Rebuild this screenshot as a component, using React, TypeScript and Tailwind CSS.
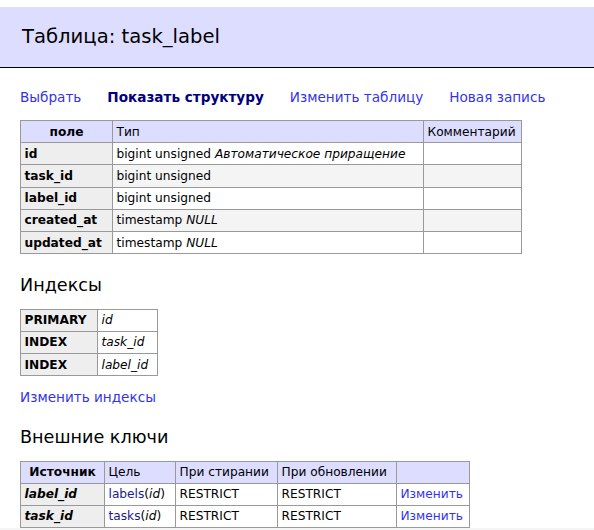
import React from 'react'

const fields = [
  { name: 'id', type: 'bigint unsigned', extra: 'Автоматическое приращение' },
  { name: 'task_id', type: 'bigint unsigned', extra: '' },
  { name: 'label_id', type: 'bigint unsigned', extra: '' },
  { name: 'created_at', type: 'timestamp', extra: 'NULL' },
  { name: 'updated_at', type: 'timestamp', extra: 'NULL' }
]

const indexes = [
  { kind: 'PRIMARY', col: 'id' },
  { kind: 'INDEX', col: 'task_id' },
  { kind: 'INDEX', col: 'label_id' }
]

const foreignKeys = [
  { source: 'label_id', table: 'labels' },
  { source: 'task_id', table: 'tasks' }
]

const cell = 'border border-[#999] px-[3.5px] py-[2.6px] align-top whitespace-nowrap'
const head = 'border border-[#999] bg-[#ddf] px-[3.5px] py-[2.6px] text-left font-normal whitespace-nowrap'
const tableCls = 'border-collapse text-[12.2px] leading-[16px]'

const App: React.FC = () => {
  return (
    <div className="min-h-[530px] bg-white text-black text-[13.6px] leading-[18px] font-['DejaVu_Sans',Verdana,sans-serif]">
      {/* Header */}
      <h2 className="mt-[7px] mb-5 border-b border-black bg-[#ddf] px-[22px] py-[17px] text-[19.6px] leading-[26px] font-normal">
        Таблица: task_label
      </h2>

      <div className="pl-5">
        <p className="my-[14px] flex gap-[26px] whitespace-nowrap">
          <a className="text-[#3333ee]">Выбрать</a>
          <a className="font-bold text-[#000080]">Показать структуру</a>
          <a className="text-[#3333ee]">Изменить таблицу</a>
          <a className="text-[#3333ee]">Новая запись</a>
        </p>

        {/* Fields */}
        <table className={tableCls + ' mt-[13px]'}>
          <thead>
            <tr>
              <th className="w-[92px] border border-[#999] bg-[#ddf] px-[6px] py-[2.6px] text-center font-bold">поле</th>
              <td className={head + ' w-[311px]'}>Тип</td>
              <td className={head + ' w-[98px]'}>Комментарий</td>
            </tr>
          </thead>
          <tbody>
            {fields.map((f, i) => (
              <tr key={f.name} className={i % 2 === 1 ? 'bg-[#f4f4f4]' : ''}>
                <th className={cell + ' bg-[#eee] text-left font-bold'}>{f.name}</th>
                <td className={cell}>
                  {f.type} {f.extra && <i>{f.extra}</i>}
                </td>
                <td className={cell}></td>
              </tr>
            ))}
          </tbody>
        </table>

        <h3 className="mt-[20px] text-[17.6px] leading-[23.4px] font-normal">Индексы</h3>
        <table className={tableCls + ' mt-[11px]'}>
          <tbody>
            {indexes.map((x) => (
              <tr key={x.col}>
                <th className={cell + ' w-[77px] bg-[#eee] text-left font-bold'}>{x.kind}</th>
                <td className={cell + ' w-[60px]'}>
                  <i>{x.col}</i>
                </td>
              </tr>
            ))}
          </tbody>
        </table>
        <p className="my-[12px]">
          <a className="text-[#3333ee]">Изменить индексы</a>
        </p>

        <h3 className="mt-[20px] text-[17.6px] leading-[23.4px] font-normal">Внешние ключи</h3>
        <table className={tableCls + ' mt-[11px]'}>
          <thead>
            <tr>
              <th className="w-[84px] border border-[#999] bg-[#ddf] px-[6px] py-[2.6px] text-center font-bold">Источник</th>
              <td className={head + ' w-[71px]'}>Цель</td>
              <td className={head + ' w-[102px]'}>При стирании</td>
              <td className={head + ' w-[119px]'}>При обновлении</td>
              <td className={head + ' w-[73px]'}></td>
            </tr>
          </thead>
          <tbody>
            {foreignKeys.map((k) => (
              <tr key={k.source}>
                <th className={cell + ' bg-[#eee] text-left font-bold italic'}>{k.source}</th>
                <td className={cell}>
                  <a className="text-[#1a1a8c]">{k.table}</a>(<i>id</i>)
                </td>
                <td className={cell}>RESTRICT</td>
                <td className={cell}>RESTRICT</td>
                <td className={cell}>
                  <a className="text-[#3333ee]">Изменить</a>
                </td>
              </tr>
            ))}
          </tbody>
        </table>
      </div>
      <div className="h-2 bg-[#f5f5f5]"></div>
    </div>
  )
}

export default App
